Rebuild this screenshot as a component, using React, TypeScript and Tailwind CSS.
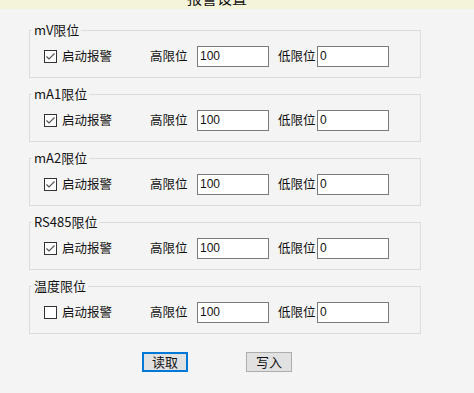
import React from "react";

const groups = [
  { title: "mV限位", on: true },
  { title: "mA1限位", on: true },
  { title: "mA2限位", on: true },
  { title: "RS485限位", on: true },
  { title: "温度限位", on: false },
];

const cjk = "font-['Microsoft_YaHei','Noto_Sans_CJK_SC',sans-serif]";

function Check({ on }: { on: boolean }) {
  return (
    <div className="w-[13px] h-[13px] shrink-0 border border-[#333333] bg-white flex items-center justify-center">
      {on && (
        <svg width="11" height="11" viewBox="0 0 11 11">
          <path d="M1.5 5.5 L4 8 L9.5 2.5" fill="none" stroke="#555555" strokeWidth="1.2" />
        </svg>
      )}
    </div>
  );
}

function LimitGroup({ title, on }: { title: string; on: boolean }) {
  return (
    <fieldset className="m-0 w-[392px] border border-[#dcdcdc] px-0 pt-[8px] pb-[10px]">
      <legend className={`ml-[2px] px-[2px] text-[13px] leading-[16px] text-[#111] ${cjk}`}>{title}</legend>
      <div className={`ml-[14px] flex items-center h-[21px] whitespace-nowrap text-[12.5px] text-[#111] ${cjk}`}>
        <div className="flex items-center w-[106px] shrink-0">
          <Check on={on} />
          <span className="ml-[5px]">启动报警</span>
        </div>
        <span className="w-[47px] shrink-0">高限位</span>
        <div className="w-[72px] h-[21px] shrink-0 border border-[#7a7a7a] bg-white pl-[2px] text-[12px] leading-[18px] font-['Liberation_Sans',sans-serif]">
          100
        </div>
        <span className="ml-[9px] w-[39px] shrink-0">低限位</span>
        <div className="w-[72px] h-[21px] shrink-0 border border-[#7a7a7a] bg-white pl-[2px] text-[12px] leading-[18px] font-['Liberation_Sans',sans-serif]">
          0
        </div>
      </div>
    </fieldset>
  );
}

export default function App() {
  return (
    <div className="w-[474px] h-[393px] bg-[#f4f4f4] flex flex-col overflow-hidden">
      <div className="h-[9px] bg-[#f4f4da] overflow-hidden flex justify-center pr-[40px]">
        <span className={`-mt-[12px] text-[15px] leading-[20px] text-[#111] ${cjk}`}>报警设置</span>
      </div>
      <div className="flex flex-col gap-[8px] pl-[29px] pt-[13px]">
        {groups.map((g) => (
          <LimitGroup key={g.title} title={g.title} on={g.on} />
        ))}
      </div>
      <div className={`flex pl-[142px] mt-[18px] gap-[58px] text-[13px] text-[#111] ${cjk}`}>
        <button className="w-[46px] h-[20px] border-2 border-[#0078d7] bg-[#e1e1e1] leading-[16px]">读取</button>
        <button className="w-[46px] h-[20px] border border-[#adadad] bg-[#e1e1e1] leading-[18px]">写入</button>
      </div>
    </div>
  );
}
